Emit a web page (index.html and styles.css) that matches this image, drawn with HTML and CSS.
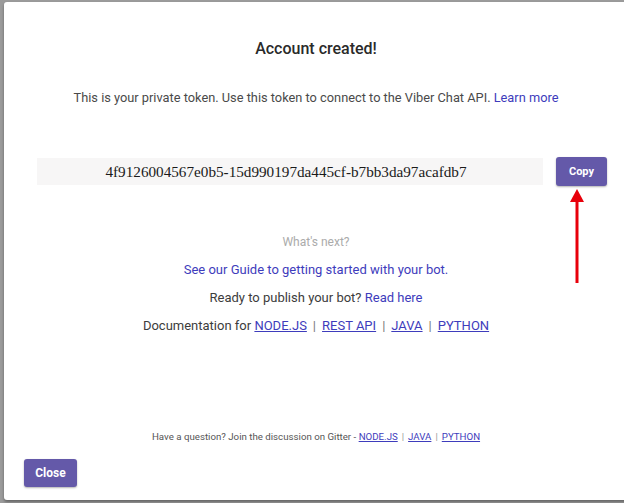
FILE: index.html
```html
<!DOCTYPE html>
<html>
<head>
  <meta http-equiv="content-type" content="text/html; charset=utf-8" />
  <title>Account created</title>
<link rel="stylesheet" href="styles.css">
</head>
<body>

<div id="modal">
  <h2 class="title">Account created!</h2>
  <p class="intro">This is your private token. Use this token to connect to the Viber Chat API. <a href="#" class="link">Learn more</a></p>

  <div class="token-row">
    <div class="token">4f9126004567e0b5-15d990197da445cf-b7bb3da97acafdb7</div>
    <button class="btn copy">Copy</button>
  </div>

  <div class="next">
    <div class="next-title">What's next?</div>
    <div><a href="#" class="link">See our Guide to getting started with your bot.</a></div>
    <div>Ready to publish your bot? <a href="#" class="link">Read here</a></div>
    <div>Documentation for <a href="#" class="doc">NODE.JS</a><span class="sep">|</span><a href="#" class="doc">REST API</a><span class="sep">|</span><a href="#" class="doc">JAVA</a><span class="sep">|</span><a href="#" class="doc">PYTHON</a></div>
  </div>

  <div class="gitter">Have a question? Join the discussion on Gitter - <a href="#" class="doc">NODE.JS</a><span class="sep">|</span><a href="#" class="doc">JAVA</a><span class="sep">|</span><a href="#" class="doc">PYTHON</a></div>

  <div class="footer">
    <button class="btn close">Close</button>
  </div>
</div>

<svg class="arrow" width="20" height="100" viewBox="0 0 20 100">
  <line x1="10" y1="12" x2="10" y2="95" stroke="#e8000b" stroke-width="3" />
  <polygon points="10,1 3,14 17,14" fill="#e8000b" />
</svg>

</body>
</html>
```

FILE: styles.css
```css
html, body {
    margin: 0;
    height: 100%;
    overflow: hidden;
}
body {
    background-color: #9b9b9b;
    font-family: Roboto, "Liberation Sans", sans-serif;
    color: #3c3c3c;
}
#modal {
    position: relative;
    margin: 2px 0 0 4px;
    width: 624px;
    height: 498px;
    box-sizing: border-box;
    background: #fff;
    border-radius: 3px;
    box-shadow: 0 2px 3px rgba(0, 0, 0, 0.35);
    padding: 37px 0 0 0;
    display: flex;
    flex-direction: column;
    text-align: center;
}
.title {
    margin: 0;
    font-size: 16px;
    line-height: 20px;
    font-weight: 500;
    color: #2a2a2a;
}
.intro {
    margin: 30px 0 0 0;
    font-size: 12.8px;
    line-height: 18px;
    color: #4a4a4a;
}
.link {
    color: #3e3cbc;
    text-decoration: none;
}
.token-row {
    display: flex;
    align-items: center;
    margin: 50px 0 0 33px;
}
.token {
    width: 506px;
    height: 27px;
    line-height: 27px;
    background: #f7f6f6;
    font-family: "Liberation Serif", serif;
    font-size: 15.2px;
    color: #1a1a1a;
    text-align: center;
    padding-right: 8px;
    box-sizing: border-box;
}
.btn {
    border: 0;
    border-radius: 3px;
    background: #6459a9;
    color: #fff;
    font-family: Roboto, "Liberation Sans", sans-serif;
    font-weight: bold;
    box-shadow: 0 1px 2px rgba(0, 0, 0, 0.3);
    padding: 0;
}
.copy {
    margin-left: 13px;
    width: 51px;
    height: 29px;
    font-size: 11px;
}
.next {
    margin-top: 47px;
    font-size: 13px;
    line-height: 18px;
    display: flex;
    flex-direction: column;
    gap: 10px;
    color: #3c3c3c;
}
.next-title {
    color: #ababab;
    font-size: 12px;
}
.doc {
    color: #3e3cbc;
    text-decoration: underline;
}
.sep {
    margin: 0 6px;
    color: #777;
}
.gitter {
    margin-top: auto;
    font-size: 9.7px;
    line-height: 14px;
    color: #555;
}
.gitter .sep {
    margin: 0 4px;
    color: #999;
}
.footer {
    text-align: left;
    padding: 15px 0 13px 20px;
}
.close {
    width: 53px;
    height: 28px;
    font-size: 12px;
}
.arrow {
    position: absolute;
    left: 567px;
    top: 188px;
}
```
